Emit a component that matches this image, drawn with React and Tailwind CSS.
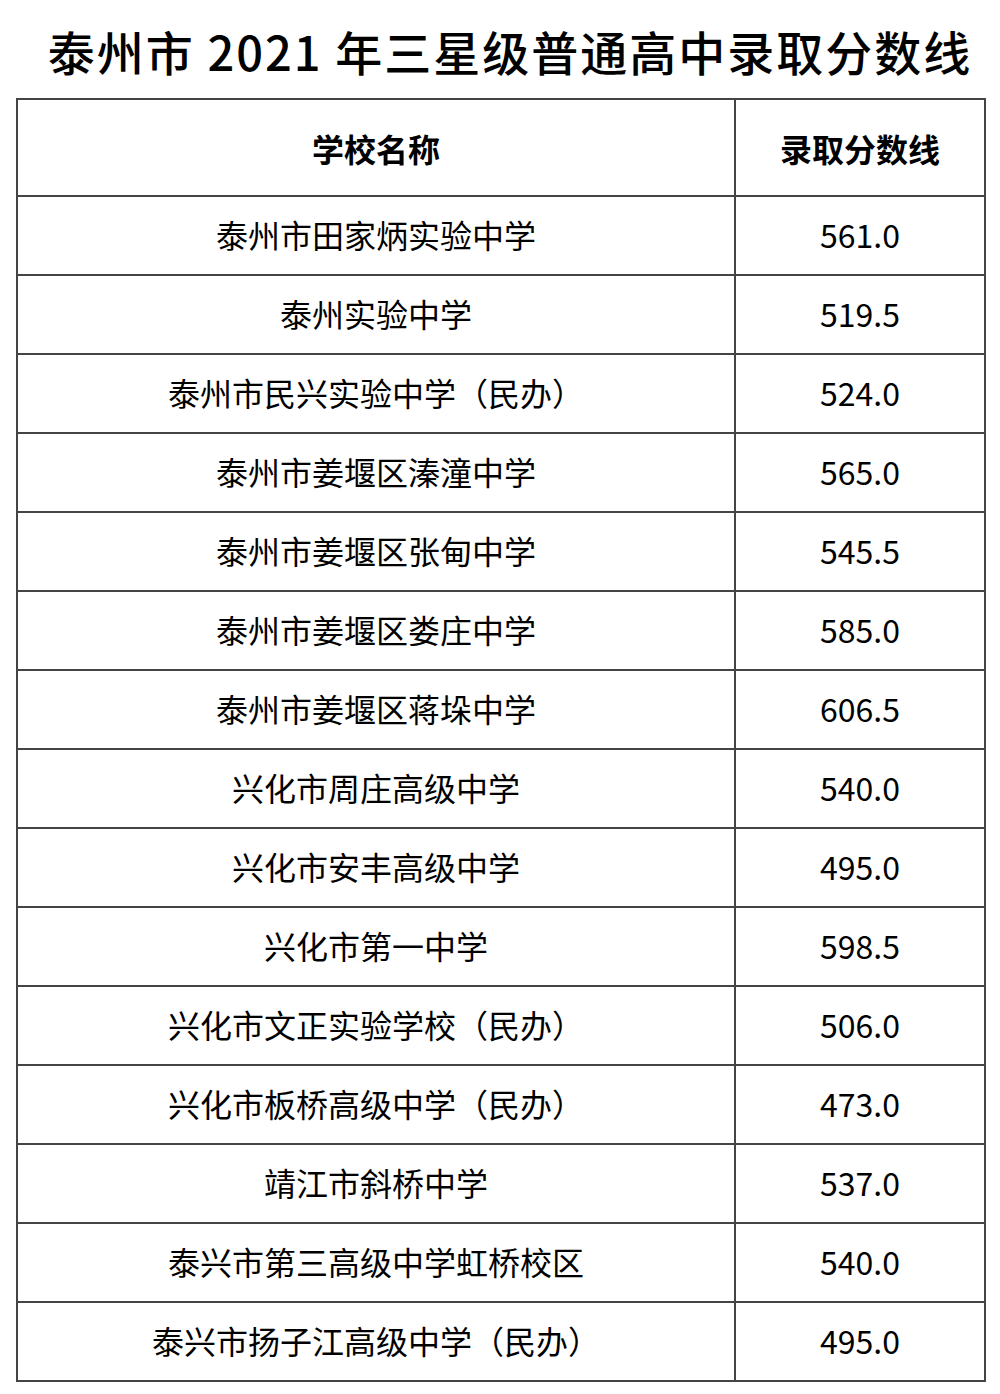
import React from 'react';

const rows = [
  ['泰州市田家炳实验中学', '561.0'],
  ['泰州实验中学', '519.5'],
  ['泰州市民兴实验中学（民办）', '524.0'],
  ['泰州市姜堰区溱潼中学', '565.0'],
  ['泰州市姜堰区张甸中学', '545.5'],
  ['泰州市姜堰区娄庄中学', '585.0'],
  ['泰州市姜堰区蒋垛中学', '606.5'],
  ['兴化市周庄高级中学', '540.0'],
  ['兴化市安丰高级中学', '495.0'],
  ['兴化市第一中学', '598.5'],
  ['兴化市文正实验学校（民办）', '506.0'],
  ['兴化市板桥高级中学（民办）', '473.0'],
  ['靖江市斜桥中学', '537.0'],
  ['泰兴市第三高级中学虹桥校区', '540.0'],
  ['泰兴市扬子江高级中学（民办）', '495.0'],
];

const font = { fontFamily: '"Noto Sans CJK SC", "Noto Sans", sans-serif' };

export default function App() {
  return (
    <div className="w-[1000px] h-[1394px] bg-white text-black" style={font}>
      <div className="h-[98px] flex items-center justify-center pl-[20px] pt-[2px]">
        <h1 className="text-[47px] font-medium leading-none tracking-[2px]">泰州市 2021 年三星级普通高中录取分数线</h1>
      </div>
      <div className="px-[16px]">
        <table className="w-[968px] border-collapse table-fixed">
          <colgroup>
            <col className="w-[718px]" />
            <col className="w-[250px]" />
          </colgroup>
          <thead>
            <tr className="h-[97px]">
              <th className="border-2 border-[#444] text-[32px] font-bold text-center">学校名称</th>
              <th className="border-2 border-[#444] text-[32px] font-bold text-center">录取分数线</th>
            </tr>
          </thead>
          <tbody>
            {rows.map(([name, score]) => (
              <tr key={name} className="h-[79px]">
                <td className="border-2 border-[#444] text-[32px] text-center pb-[3px]">{name}</td>
                <td className="border-2 border-[#444] text-[32px] text-center pb-[3px]">{score}</td>
              </tr>
            ))}
          </tbody>
        </table>
      </div>
    </div>
  );
}
